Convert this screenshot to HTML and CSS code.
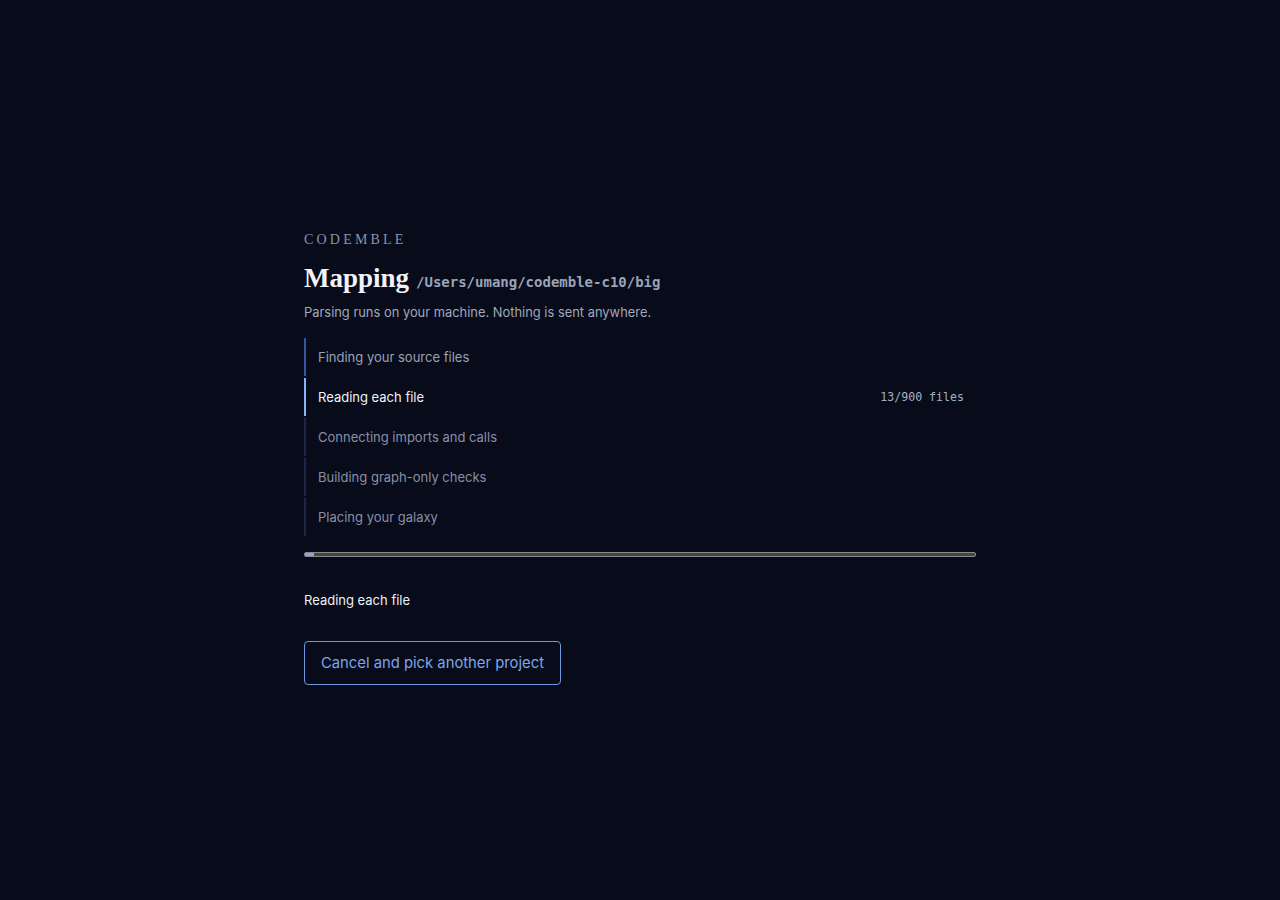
FILE: index.html
```html
<!DOCTYPE html>
<html lang="en">
<head>
<meta charset="utf-8">
<title>Codemble — Mapping</title>
<link rel="stylesheet" href="styles.css">
</head>
<body>
<main class="screen">
  <section class="panel">
    <div class="brand">CODEMBLE</div>
    <h1 class="title">Mapping <code class="path">/Users/umang/codemble-c10/big</code></h1>
    <p class="sub">Parsing runs on your machine. Nothing is sent anywhere.</p>
    <ol class="steps">
      <li class="step done"><span>Finding your source files</span></li>
      <li class="step active"><span>Reading each file</span><span class="count">13/900 files</span></li>
      <li class="step"><span>Connecting imports and calls</span></li>
      <li class="step"><span>Building graph-only checks</span></li>
      <li class="step"><span>Placing your galaxy</span></li>
    </ol>
    <div class="bar"><div class="fill" style="width:1.4%"></div></div>
    <p class="status">Reading each file</p>
    <button class="cancel">Cancel and pick another project</button>
  </section>
</main>
</body>
</html>
```
FILE: styles.css
```css
* { box-sizing: border-box; }
html, body { margin: 0; height: 100%; }
body {
  background: #070b1a;
  font-family: "Inter", "Noto Sans", sans-serif;
  color: #e8ecf5;
}
.screen {
  min-height: 100vh;
  display: flex;
  align-items: center;
  justify-content: center;
}
.panel {
  width: 672px;
  display: flex;
  flex-direction: column;
  margin-top: 16px;
}
.brand {
  font-family: "Liberation Serif", "DejaVu Serif", serif;
  font-size: 14px;
  letter-spacing: 3.2px;
  color: #8a93ad;
  line-height: 16px;
}
.title {
  margin: 15px 0 0;
  font-family: "Liberation Serif", "DejaVu Serif", serif;
  font-size: 27px;
  font-weight: 700;
  line-height: 30px;
  color: #f1f3f8;
  display: flex;
  align-items: baseline;
  gap: 7px;
}
.path {
  font-family: "DejaVu Sans Mono", "Liberation Mono", monospace;
  font-size: 14px;
  font-weight: 700;
  color: #9aa3b8;
}
.sub {
  margin: 7px 0 0;
  font-size: 12.9px;
  line-height: 18px;
  color: #a0a8bc;
}
.steps {
  list-style: none;
  margin: 16px 0 0;
  padding: 0;
  display: flex;
  flex-direction: column;
  gap: 2px;
}
.step {
  height: 38px;
  display: flex;
  align-items: center;
  justify-content: space-between;
  padding: 0 12px 0 12px;
  border-left: 2px solid #1c2748;
  font-size: 13px;
  color: #8890a8;
}
.step.done { border-left-color: #34569f; color: #9aa2b8; }
.step.active { border-left-color: #8ab4f8; color: #f0f3f9; }
.count {
  font-family: "DejaVu Sans Mono", "Liberation Mono", monospace;
  font-size: 11.6px;
  color: #a8b0c4;
}
.bar {
  margin-top: 16px;
  height: 5px;
  background: #464646;
  border: 1px solid #8a8a8a;
  border-radius: 2px;
  overflow: hidden;
}
.fill { height: 100%; background: #7fa8e6; }
.status {
  margin: 34px 0 0;
  font-size: 13px;
  line-height: 18px;
  color: #eef1f7;
}
.cancel {
  margin-top: 32px;
  align-self: flex-start;
  height: 44px;
  padding: 0 16px;
  background: transparent;
  border: 1px solid #6d95e0;
  border-radius: 4px;
  color: #7ea6e8;
  font-family: inherit;
  font-size: 14.8px;
}
```
